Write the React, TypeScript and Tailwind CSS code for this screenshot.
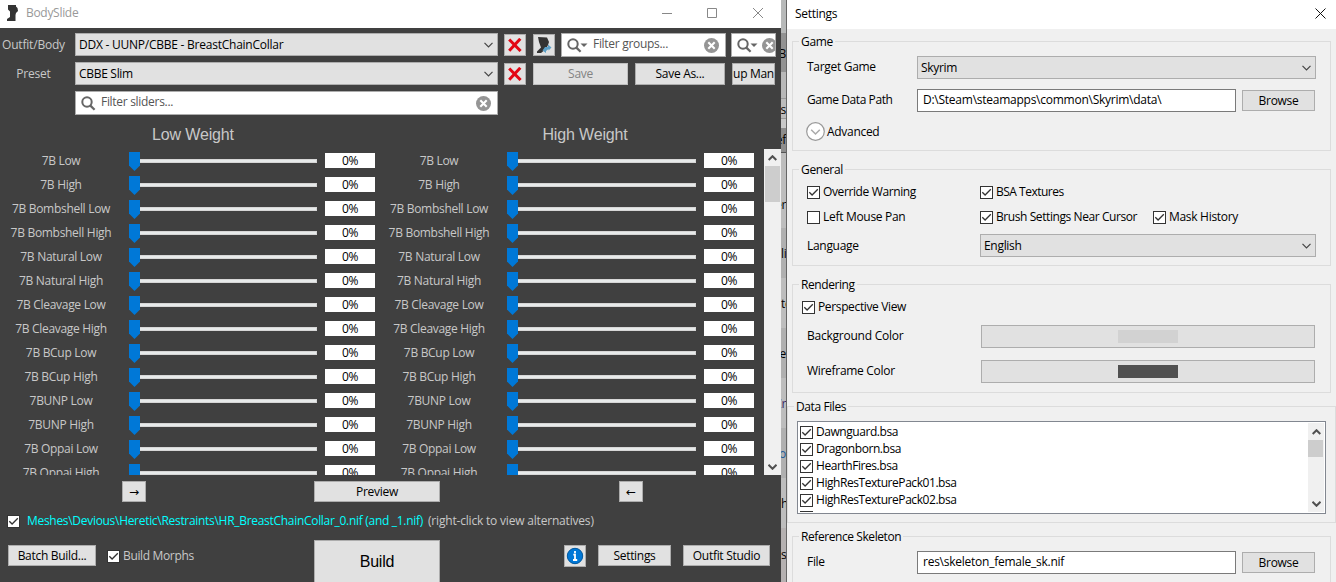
import type { ReactNode } from "react";

const sliders = [
  "7B Low",
  "7B High",
  "7B Bombshell Low",
  "7B Bombshell High",
  "7B Natural Low",
  "7B Natural High",
  "7B Cleavage Low",
  "7B Cleavage High",
  "7B BCup Low",
  "7B BCup High",
  "7BUNP Low",
  "7BUNP High",
  "7B Oppai Low",
  "7B Oppai High",
];

const dataFiles = [
  "Dawnguard.bsa",
  "Dragonborn.bsa",
  "HearthFires.bsa",
  "HighResTexturePack01.bsa",
  "HighResTexturePack02.bsa",
];

function Chevron({ up = false, bold = false }: { up?: boolean; bold?: boolean }) {
  return (
    <svg width="9" height="6" viewBox="0 0 9 6" fill="none" className="shrink-0">
      <path
        d={up ? "M0.7 5 L4.5 1.2 L8.3 5" : "M0.5 0.8 L4.5 4.8 L8.5 0.8"}
        stroke={bold ? "#505050" : "#444"}
        strokeWidth={bold ? 2 : 1.2}
      />
    </svg>
  );
}

function Check({ checked = true }: { checked?: boolean }) {
  return (
    <span className="flex h-[13px] w-[13px] shrink-0 items-center justify-center border border-[#333] bg-white">
      {checked && (
        <svg width="11" height="11" viewBox="0 0 11 11" fill="none">
          <path d="M1.3 5.2 L4.1 8 L9.8 2.2" stroke="#333" strokeWidth="1.3" />
        </svg>
      )}
    </span>
  );
}

function Button({ children, className = "" }: { children?: ReactNode; className?: string }) {
  return (
    <button
      className={`flex shrink-0 items-center justify-center overflow-hidden border border-[#adadad] bg-[#e1e1e1] whitespace-nowrap ${className}`}
    >
      {children}
    </button>
  );
}

function Combo({ text, className = "" }: { text: string; className?: string }) {
  return (
    <div
      className={`flex h-[23px] shrink-0 items-center justify-between border border-[#adadad] bg-[#e1e1e1] pr-[4px] pl-[3px] ${className}`}
    >
      <span>{text}</span>
      <Chevron />
    </div>
  );
}

function Lens({ menu = false }: { menu?: boolean }) {
  return (
    <svg width={menu ? 21 : 15} height="15" viewBox={menu ? "0 0 21 15" : "0 0 15 15"} fill="none" className="shrink-0">
      <circle cx="6" cy="6" r="4.7" stroke="#666" strokeWidth="2" />
      <path d="M9.4 9.6 L13.6 13.8" stroke="#666" strokeWidth="2.2" />
      {menu && <path d="M13.5 5.5 H20.5 L17 9 Z" fill="#666" />}
    </svg>
  );
}

function Clear() {
  return (
    <svg width="15" height="15" viewBox="0 0 15 15" className="shrink-0">
      <circle cx="7.5" cy="7.5" r="7.5" fill="#959595" />
      <path d="M4.3 4.3 L10.7 10.7 M10.7 4.3 L4.3 10.7" stroke="#fff" strokeWidth="2.1" />
    </svg>
  );
}

function RedX() {
  return (
    <svg width="14" height="14" viewBox="0 0 14 14">
      <path d="M1.2 1.5 L12.6 13 M12.3 0.8 L1.2 12.8" stroke="#e30613" strokeWidth="3" />
    </svg>
  );
}

function SliderCell({ name, high = false }: { name: string; high?: boolean }) {
  return (
    <div className="flex h-6 w-[378px] shrink-0 items-start">
      <span className="mt-[4px] w-[122px] shrink-0 text-center text-[#c8c8c8]">{name}</span>
      <svg width="11" height="19" viewBox="0 0 11 19" className="mt-[3px] ml-[7px] shrink-0">
        <path d="M0 0 H11 V13.5 L5.5 19 L0 13.5 Z" fill="#0078d7" />
      </svg>
      <div
        className={`mt-[10px] h-1 shrink-0 border border-l-0 border-[#d6d6d6] bg-[#e7eaea] ${high ? "w-[178px]" : "w-[177px]"}`}
      />
      <div className="mt-1 ml-2 flex h-[15px] w-[50px] shrink-0 items-center justify-center bg-white">0%</div>
    </div>
  );
}

function Group({ title, className = "", legend = "", children }: { title: string; className?: string; legend?: string; children: ReactNode }) {
  return (
    <section className={`flex shrink-0 flex-col items-start border border-[#dcdcdc] ${className}`}>
      <h2 className={`-mt-[8px] h-4 bg-[#f0f0f0] px-[2px] ${legend}`}>{title}</h2>
      {children}
    </section>
  );
}

function BodySlide() {
  return (
    <div className="flex h-[582px] w-[781px] shrink-0 flex-col overflow-hidden bg-[#404040]">
      <header className="flex h-7 shrink-0 items-center bg-white text-[#999]">
        <svg width="14" height="16" viewBox="0 0 14 16" className="-mt-[3px] ml-[6px]">
          <path d="M2 0 H10 V1.5 L11.5 3 L12 6 L10 8 L9.5 10 V16 H1 V14 L4 12 V6.5 L2 4.5 Z" fill="#333" />
        </svg>
        <span className="ml-[6px] h-4 -translate-y-px">BodySlide</span>
        <svg width="104" height="12" viewBox="0 0 104 12" fill="none" stroke="#888" className="mr-[17px] ml-auto -translate-y-px">
          <path d="M2 6.5 H12 M47.5 1.5 H56.5 V10.5 H47.5 Z M93 1 L103 11 M103 1 L93 11" />
        </svg>
      </header>

      <div className="flex shrink-0 flex-col gap-[5px] pt-[5px]">
        <div className="flex h-6 items-start">
          <span className="mt-[4px] mr-2 w-[67px] text-center tracking-[-0.2px] text-[#c8c8c8]">Outfit/Body</span>
          <Combo text="DDX - UUNP/CBBE - BreastChainCollar" className="w-[423px] tracking-[-0.24px]" />
          <Button className="mt-px ml-[6px] h-[22px] w-[22px]">
            <RedX />
          </Button>
          <Button className="mt-px ml-[7px] h-[22px] w-[22px]">
            <svg width="16" height="18" viewBox="0 0 16 18">
              <path d="M2 1 L11 1.5 L13 6 L12 9 L10 13 L5 17 H1 V15.5 L5 11.5 L3 6 Z" fill="#333" />
              <path d="M9 11 H12 V8.5 L15.5 11.5 L12.5 14.5 V13 L10 15 V17 L6.5 14.5 Z" fill="#5c9fc6" />
            </svg>
          </Button>
          <div className="ml-[6px] flex h-6 w-[165px] shrink-0 items-center border border-[#adadad] bg-white pr-[6px] pl-[5px]">
            <Lens menu />
            <span className="ml-[5px] h-[18px] grow text-[#555]">Filter groups...</span>
            <Clear />
          </div>
          <div className="ml-[5px] flex h-6 w-[45px] shrink-0 items-center gap-1 overflow-hidden border border-[#adadad] bg-white pl-[5px]">
            <Lens menu />
            <Clear />
          </div>
        </div>
        <div className="flex h-6 items-start">
          <span className="mt-[4px] mr-2 w-[67px] text-center tracking-[-0.2px] text-[#c8c8c8]">Preset</span>
          <Combo text="CBBE Slim" className="w-[423px]" />
          <Button className="mt-px ml-[6px] h-[22px] w-[22px]">
            <RedX />
          </Button>
          <Button className="mt-px ml-[7px] h-[22px] w-[95px] border-[#bfbfbf] bg-[#cccccc] text-[#838383]">Save</Button>
          <Button className="mt-px ml-[7px] h-[22px] w-[90px]">Save As...</Button>
          <Button className="mt-px ml-[7px] h-[22px] w-[43px]">up Man</Button>
        </div>
        <div className="ml-[75px] flex h-6 w-[423px] shrink-0 items-center border border-[#adadad] bg-white pr-[6px] pl-[5px]">
          <Lens />
          <span className="ml-[5px] h-[18px] grow text-[#555]">Filter sliders...</span>
          <Clear />
        </div>
      </div>

      <div className="flex h-[34px] shrink-0 items-center pt-[5px] font-['Liberation_Sans',sans-serif] text-base tracking-[-0.15px] text-[#c8c8c8]">
        <span className="ml-[4px] w-[378px] text-center">Low Weight</span>
        <span className="ml-[14px] w-[378px] text-center">High Weight</span>
      </div>

      <div className="flex h-[326px] shrink-0 overflow-hidden">
        <div className="flex w-[764px] flex-col">
          {sliders.map((name) => (
            <div key={name} className="flex h-6 shrink-0">
              <SliderCell name={name} />
              <SliderCell name={name} high />
            </div>
          ))}
        </div>
        <div className="flex w-[17px] flex-col items-center bg-[#f0f0f0]">
          <div className="flex h-[17px] items-center">
            <Chevron up bold />
          </div>
          <div className="h-9 w-[15px] bg-[#cdcdcd]" />
          <div className="mt-auto flex h-[17px] items-center">
            <Chevron bold />
          </div>
        </div>
      </div>

      <div className="mt-[6px] flex h-[21px] shrink-0">
        <Button className="ml-[122px] w-6 font-['DejaVu_Sans',sans-serif]">→</Button>
        <Button className="ml-[168px] w-[126px]">Preview</Button>
        <Button className="ml-[179px] w-6 font-['DejaVu_Sans',sans-serif]">←</Button>
      </div>

      <div className="mt-[11px] flex h-4 shrink-0 items-center">
        <span className="ml-[7px]">
          <Check />
        </span>
        <span className="ml-[7px] w-[401px] whitespace-nowrap text-[#00ffff]">
          Meshes\Devious\Heretic\Restraints\HR_BreastChainCollar_0.nif (and _1.nif)
        </span>
        <span className="tracking-[-0.19px] whitespace-nowrap text-[#c8c8c8]">(right-click to view alternatives)</span>
      </div>

      <div className="mt-[11px] flex h-[42px] shrink-0 items-start">
        <Button className="mt-[5px] ml-2 h-[21px] w-[88px]">Batch Build...</Button>
        <div className="mt-[8px] ml-[11px] flex w-[207px] items-center gap-[3px] tracking-[-0.35px] text-[#c8c8c8]">
          <Check />
          <span>Build Morphs</span>
        </div>
        <Button className="h-[43px] w-[126px] font-['Liberation_Sans',sans-serif] text-base tracking-[-0.2px]">Build</Button>
        <Button className="mt-[5px] ml-[124px] h-[22px] w-[22px]">
          <svg width="18" height="18" viewBox="0 0 18 18" className="shrink-0">
            <circle cx="9" cy="9" r="7.7" fill="#0078d7" stroke="#00569c" />
            <path d="M9 4 V6.2 M7.3 7.6 H9 V13 M7 13 H11.2" stroke="#fff" strokeWidth="1.8" fill="none" />
          </svg>
        </Button>
        <Button className="mt-[5px] ml-3 h-[21px] w-[73px]">Settings</Button>
        <Button className="mt-[5px] ml-3 h-[21px] w-[87px]">Outfit Studio</Button>
      </div>
    </div>
  );
}

function BackgroundStrip() {
  return (
    <div className="flex h-[582px] w-[6px] shrink-0 flex-col overflow-hidden border-r border-[#666] bg-[#bdbdbd]">
      <div className="h-[33px] shrink-0 bg-[#b7b9b9]" />
      <div className="flex h-[39px] shrink-0 items-center justify-end bg-[#929292] pt-[2px]">B</div>
      <div className="h-[26px] shrink-0 bg-[#b8b8b8]" />
      <div className="flex h-[21px] shrink-0 items-center justify-end border-y border-[#999] bg-[#bcbcbc] pt-[3px]">s</div>
      <div className="h-[9px] shrink-0 bg-[#c9c9c9]" />
      <div className="flex h-[25px] shrink-0 items-center justify-end border-b border-[#555] bg-[#8d8d8d]">ef</div>
      <div className="flex h-[75px] shrink-0 items-center justify-end pt-[28px]">er</div>
      <div className="flex h-[50px] shrink-0 items-center bg-[#b0b0b0] pt-[2px]">li</div>
      <div className="flex h-[50px] shrink-0 items-center pt-[2px]">te</div>
      <div className="flex h-[50px] shrink-0 items-center justify-end bg-[#b0b0b0] pt-[2px]">ie</div>
      <div className="flex h-[50px] shrink-0 items-center justify-end pt-[2px] text-[#332266]">Cr</div>
      <div className="flex h-[50px] shrink-0 items-center justify-end bg-[#b0b0b0] pt-[2px] text-[#1d5b99]">o</div>
      <div className="flex h-[50px] shrink-0 items-center pt-[2px]">h</div>
      <div className="flex h-[54px] shrink-0 items-center bg-[#b5b1b1]">si</div>
    </div>
  );
}

function Option({ label, checked = true, className = "" }: { label: string; checked?: boolean; className?: string }) {
  return (
    <label className={`flex h-4 shrink-0 items-center gap-[3px] whitespace-nowrap ${className}`}>
      <Check checked={checked} />
      <span>{label}</span>
    </label>
  );
}

function Field({ value }: { value: string }) {
  return (
    <div className="flex h-[23px] w-[319px] shrink-0 items-center border border-[#7a7a7a] bg-white pb-px pl-[5px] tracking-[-0.25px]">
      <span>{value}</span>
    </div>
  );
}

function Settings() {
  return (
    <div className="flex h-[582px] w-[549px] shrink-0 flex-col overflow-hidden bg-[#f0f0f0]">
      <header className="flex h-[29px] shrink-0 items-center justify-between bg-white pr-[10px] pb-px pl-2">
        <span>Settings</span>
        <svg width="11" height="11" viewBox="0 0 11 11" stroke="#111" className="-mt-px">
          <path d="M0.5 0.5 L10.5 10.5 M10.5 0.5 L0.5 10.5" />
        </svg>
      </header>

      <Group title="Game" className="mt-3 ml-[5px] h-[110px] w-[539px]" legend="ml-[6px]">
        <div className="mt-[6px] flex h-[23px]">
          <span className="ml-[14px] w-[110px] pt-[3px]">Target Game</span>
          <Combo text="Skyrim" className="w-[399px]" />
        </div>
        <div className="mt-[10px] flex h-[23px]">
          <span className="ml-[14px] w-[110px] pt-[3px] tracking-[-0.42px]">Game Data Path</span>
          <Field value="D:\Steam\steamapps\common\Skyrim\data\" />
          <Button className="mt-px ml-[6px] h-[21px] w-[73px]">Browse</Button>
        </div>
        <div className="mt-[10px] ml-[13px] flex h-[19px] items-center gap-[2px]">
          <svg width="19" height="19" viewBox="0 0 19 19" fill="none">
            <circle cx="9.5" cy="9.5" r="8.8" fill="#fff" stroke="#999" strokeWidth="1.2" />
            <path d="M5.2 7.7 L9.5 12 L13.8 7.7" stroke="#aaa" strokeWidth="1.5" />
          </svg>
          <span>Advanced</span>
        </div>
      </Group>

      <Group title="General" className="mt-[18px] ml-[5px] h-[97px] w-[539px]" legend="ml-[6px]">
        <div className="mt-[6px] ml-[14px] flex">
          <Option label="Override Warning" className="w-[173px] tracking-[-0.38px]" />
          <Option label="BSA Textures" className="tracking-[-0.5px]" />
        </div>
        <div className="mt-[9px] ml-[14px] flex">
          <Option label="Left Mouse Pan" checked={false} className="w-[173px]" />
          <Option label="Brush Settings Near Cursor" className="w-[173px] tracking-[-0.42px]" />
          <Option label="Mask History" />
        </div>
        <div className="mt-[9px] flex h-[23px]">
          <span className="ml-[14px] w-[173px] pt-[4px]">Language</span>
          <Combo text="English" className="w-[336px]" />
        </div>
      </Group>

      <Group title="Rendering" className="mt-[18px] ml-[5px] h-[109px] w-[539px]" legend="ml-[6px] tracking-[-0.42px]">
        <Option label="Perspective View" className="mt-[6px] ml-[9px] tracking-[-0.36px]" />
        <div className="mt-[10px] flex h-[23px]">
          <span className="ml-[14px] w-[174px] pt-[3px] tracking-[-0.24px]">Background Color</span>
          <Button className="w-[334px]">
            <span className="h-[13px] w-[60px] bg-[#d2d2d2]" />
          </Button>
        </div>
        <div className="mt-[12px] flex h-[23px]">
          <span className="ml-[14px] w-[174px] pt-[3px]">Wireframe Color</span>
          <Button className="w-[334px]">
            <span className="h-[13px] w-[60px] bg-[#505050]" />
          </Button>
        </div>
      </Group>

      <Group title="Data Files" className="mt-[13px] h-[117px] w-[549px]" legend="ml-[6px] tracking-[-0.4px]">
        <div className="mt-[6px] ml-[9px] flex h-[93px] w-[529px] border border-[#828790] bg-white">
          <div className="flex h-[90px] grow flex-col overflow-hidden pt-[2px] pl-[2px] tracking-[-0.44px]">
            {dataFiles.map((file) => (
              <Option key={file} label={file} className="mb-px" />
            ))}
            <Option label="" />
          </div>
          <div className="mt-px mr-px flex h-[89px] w-4 flex-col items-center bg-[#f0f0f0]">
            <div className="flex h-[17px] items-center">
              <Chevron up bold />
            </div>
            <div className="h-[17px] w-[15px] self-start bg-[#cdcdcd]" />
            <div className="mt-auto flex h-[17px] items-center">
              <Chevron bold />
            </div>
          </div>
        </div>
      </Group>

      <Group title="Reference Skeleton" className="mt-[13px] ml-[5px] h-[60px] w-[539px]" legend="ml-[6px] tracking-[-0.42px]">
        <div className="mt-[6px] flex h-[23px]">
          <span className="ml-[14px] w-[110px] pt-[3px]">File</span>
          <Field value="res\skeleton_female_sk.nif" />
          <Button className="mt-px ml-[6px] h-[21px] w-[73px]">Browse</Button>
        </div>
      </Group>
    </div>
  );
}

export default function App() {
  return (
    <main className="flex h-[582px] w-[1336px] overflow-hidden font-['Open_Sans','Noto_Sans',sans-serif] text-[12px] leading-4 tracking-[-0.3px] text-black">
      <BodySlide />
      <BackgroundStrip />
      <Settings />
    </main>
  );
}
